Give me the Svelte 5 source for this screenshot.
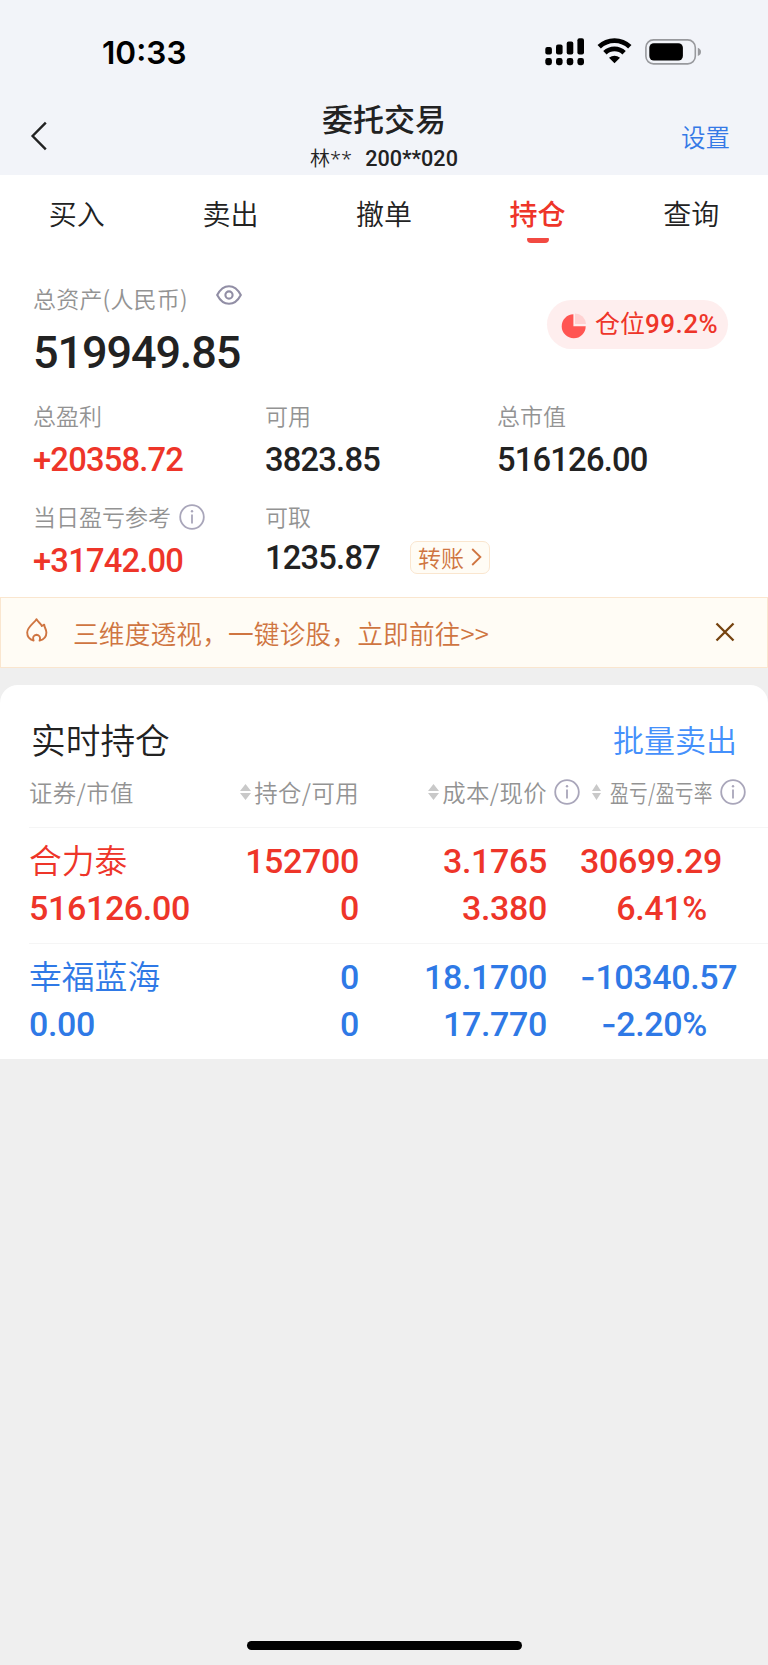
<script>
  let activeTab = $state('持仓');
  let showAmounts = $state(true);
  let showBanner = $state(true);

  const tabs = ['买入', '卖出', '撤单', '持仓', '查询'];

  const columns = [
    { label: '证券/市值', sortable: false, info: false },
    { label: '持仓/可用', sortable: true, info: false },
    { label: '成本/现价', sortable: true, info: true },
    { label: '盈亏/盈亏率', sortable: true, info: true, narrow: true }
  ];

  const holdings = [
    {
      name: '合力泰',
      value: '516126.00',
      amount: '152700',
      available: '0',
      cost: '3.1765',
      price: '3.380',
      profit: '30699.29',
      rate: '6.41%',
      trend: 'up'
    },
    {
      name: '幸福蓝海',
      value: '0.00',
      amount: '0',
      available: '0',
      cost: '18.1700',
      price: '17.770',
      profit: '-10340.57',
      rate: '-2.20%',
      trend: 'down'
    }
  ];

  // Hide amounts when the eye is toggled off
  function mask(text) {
    return showAmounts ? text : '****';
  }
</script>

{#snippet infoIcon()}
  <svg class="info-icon" width="26" height="26" viewBox="0 0 26 26" fill="none">
    <circle cx="13" cy="13" r="11.8" stroke="#a9a6ba" stroke-width="1.8" />
    <path d="M13 10.6V19.4" stroke="#a9a6ba" stroke-width="1.8" />
    <circle cx="13" cy="7.2" r="1.2" fill="#a9a6ba" />
  </svg>
{/snippet}

{#snippet signed(text)}
  {#if text.startsWith('-')}<span class="sign">-</span>{text.slice(1)}{:else}{text}{/if}
{/snippet}

<div class="screen">
  <div class="status-bar">
    <span class="time">10:33</span>
    <div class="status-icons">
      <svg width="40" height="28" viewBox="0 0 40 28">
        <rect x="0.3" y="9" width="6.6" height="7.5" rx="2" />
        <rect x="11" y="6.5" width="6.6" height="10" rx="2" />
        <rect x="21.7" y="3.5" width="6.6" height="13" rx="2" />
        <rect x="32.4" y="0.3" width="6.6" height="16.2" rx="2" />
        <rect x="0.3" y="20" width="6.6" height="7.2" rx="2.4" />
        <rect x="11" y="20" width="6.6" height="7.2" rx="2.4" />
        <rect x="21.7" y="20" width="6.6" height="7.2" rx="2.4" />
        <rect x="32.4" y="20" width="6.6" height="7.2" rx="2.4" />
      </svg>
      <svg class="wifi" width="35" height="26" viewBox="0 0 35 26">
        <path d="M2.2 8.8A22 22 0 0 1 32.8 8.8" fill="none" stroke="#000" stroke-width="4.8" />
        <path d="M7.9 14.7A13.8 13.8 0 0 1 27.1 14.7" fill="none" stroke="#000" stroke-width="4.8" />
        <path d="M12 19.8Q17.5 15.8 23 19.8L17.5 25.3Z" />
      </svg>
      <svg class="battery" width="57" height="26" viewBox="0 0 57 26">
        <rect x="0.9" y="0.9" width="49.4" height="24" rx="7.6" fill="none" stroke="#98999d" stroke-width="1.6" />
        <rect x="4.3" y="4.2" width="33.6" height="17.4" rx="4.6" />
        <path d="M52.8 8.8Q56 10.2 56 12.9Q56 15.6 52.8 17Z" fill="#98999d" />
      </svg>
    </div>
  </div>

  <header class="nav">
    <button class="back" aria-label="返回">
      <svg width="18" height="30" viewBox="0 0 18 30" fill="none">
        <path d="M15.8 1.6L2.6 15L15.8 28.4" stroke="#222" stroke-width="2.4" />
      </svg>
    </button>
    <div class="nav-title">
      <h1>委托交易</h1>
      <div class="account"><span class="owner">林**</span><span class="num">200**020</span></div>
    </div>
    <button class="settings">设置</button>
  </header>

  <nav class="tabs">
    {#each tabs as tab}
      <button class="tab" class:active={tab === activeTab} onclick={() => (activeTab = tab)}>{tab}</button>
    {/each}
  </nav>

  <section class="assets">
    <div class="total">
      <div class="total-main">
        <div class="total-label">
          <span class="label">总资产(人民币)</span>
          <button class="eye" aria-label="显示金额" onclick={() => (showAmounts = !showAmounts)}>
            <svg width="26" height="20" viewBox="0 0 26 20" fill="none" stroke="#918ea5" stroke-width="2.1">
              <path d="M1.2 10Q5.8 1.2 13 1.2T24.8 10Q20.2 18.8 13 18.8T1.2 10Z" />
              <circle cx="13" cy="10" r="3.6" />
            </svg>
          </button>
        </div>
        <div class="total-value num">{mask('519949.85')}</div>
      </div>
      <div class="position">
        <svg width="26" height="26" viewBox="0 0 26 26">
          <path d="M12.4 1.2A12 12 0 1 0 24.7 13.2H12.4Z" fill="#ff5552" />
          <path d="M14 0.6A11 11 0 0 1 25 11H14Z" fill="#ffd2d2" />
        </svg>
        <span>仓位<span class="num">99.2%</span></span>
      </div>
    </div>

    <div class="stats">
      <div class="stat">
        <div class="label">总盈利</div>
        <div class="value num red">{mask('+20358.72')}</div>
      </div>
      <div class="stat">
        <div class="label">可用</div>
        <div class="value num">{mask('3823.85')}</div>
      </div>
      <div class="stat">
        <div class="label">总市值</div>
        <div class="value num">{mask('516126.00')}</div>
      </div>
      <div class="stat">
        <div class="label">当日盈亏参考{@render infoIcon()}</div>
        <div class="value num red">{mask('+31742.00')}</div>
      </div>
      <div class="stat">
        <div class="label">可取</div>
        <div class="value-row">
          <span class="value num">{mask('1235.87')}</span>
          <button class="transfer">
            转账
            <svg width="11" height="18" viewBox="0 0 11 18" fill="none">
              <path d="M1.2 1L9.4 9L1.2 17" stroke="#cf7541" stroke-width="1.8" />
            </svg>
          </button>
        </div>
      </div>
    </div>
  </section>

  {#if showBanner}
    <div class="banner">
      <svg class="flame" width="22" height="24" viewBox="0 0 22 24" fill="none">
        <path
          d="M10.5 1.2C8.2 5.2 1.2 8.6 1.2 14.6C1.2 18.7 3.8 21.6 7.6 22.6C6.4 18.9 7.8 17 10.6 16.7C13.2 17 14.8 18.9 13.6 22.6C17.5 21.6 20.4 18.6 20.4 14.4C20.4 11.4 18.4 9.8 18.2 6.6L15.8 8C14.8 5.4 12 4.3 10.5 1.2Z"
          stroke="#cf7541"
          stroke-width="1.9"
          stroke-linejoin="round"
        />
      </svg>
      <span class="banner-text">三维度透视，一键诊股，立即前往&gt;&gt;</span>
      <button class="close" aria-label="关闭" onclick={() => (showBanner = false)}>
        <svg width="20" height="20" viewBox="0 0 20 20" fill="none">
          <path d="M1.5 1.5L18.5 18.5M18.5 1.5L1.5 18.5" stroke="#75430f" stroke-width="2.3" />
        </svg>
      </button>
    </div>
  {/if}

  <section class="card">
    <div class="card-head">
      <h2>实时持仓</h2>
      <button class="batch">批量卖出</button>
    </div>

    <div class="grid table-head">
      {#each columns as col}
        <div class="th" class:narrow={col.narrow}>
          {#if col.sortable}
            <svg class="sort" width="11" height="16" viewBox="0 0 11 16" preserveAspectRatio="none" fill="#c9c9c9">
              <path d="M5.5 0L11 6.9H0ZM5.5 16L11 9.1H0Z" />
            </svg>
          {/if}
          <span class="th-text"><span>{col.label}</span></span>
          {#if col.info}{@render infoIcon()}{/if}
        </div>
      {/each}
    </div>

    {#each holdings as item}
      <div class="grid holding {item.trend}">
        <div class="name">{item.name}</div>
        <div class="num">{item.amount}</div>
        <div class="num">{item.cost}</div>
        <div class="num profit">{@render signed(item.profit)}</div>
        <div class="num">{item.value}</div>
        <div class="num">{item.available}</div>
        <div class="num">{item.price}</div>
        <div class="num rate">{@render signed(item.rate)}</div>
      </div>
    {/each}
  </section>

  <div class="home-bar"></div>
</div>

<style>
  :global(body) {
    margin: 0;
    background: #efefef;
  }

  .screen {
    display: flex;
    flex-direction: column;
    width: 768px;
    height: 1665px;
    overflow: hidden;
    background: #efefef;
    color: #222;
    font-family: 'Noto Sans CJK SC', sans-serif;
    font-weight: 350;
  }

  .screen > * {
    flex-shrink: 0;
    box-sizing: border-box;
  }

  button {
    margin: 0;
    padding: 0;
    border: none;
    background: none;
    color: inherit;
    font: inherit;
    cursor: pointer;
  }

  svg {
    display: block;
    flex-shrink: 0;
  }

  h1,
  h2 {
    margin: 0;
  }

  .num {
    font-family: Roboto, sans-serif;
    font-weight: 500;
  }

  .sign {
    font-family: Inter, sans-serif;
    line-height: 1;
  }

  .red {
    color: #ee3529;
  }

  /* Status bar and navigation */
  .status-bar {
    display: flex;
    justify-content: space-between;
    height: 100px;
    padding: 38px 66px 0 102px;
    background: #f2f4f9;
    color: #000;
  }

  .time {
    height: 28px;
    line-height: 29px;
    font-family: Inter, sans-serif;
    font-size: 31.6px;
    font-weight: 600;
  }

  .status-icons {
    display: flex;
    align-items: flex-start;
  }

  .wifi {
    margin: 0 13px 0 12px;
  }

  .battery {
    margin-top: 1px;
  }

  .nav {
    display: grid;
    grid-template-columns: 150px 1fr 150px;
    height: 75px;
    background: #f2f4f9;
  }

  .back {
    padding: 21px 0 0 30px;
    justify-self: start;
    align-self: start;
  }

  .nav-title {
    text-align: center;
  }

  h1 {
    height: 38px;
    line-height: 35px;
    font-size: 31px;
    font-weight: 500;
  }

  .account {
    display: flex;
    justify-content: center;
    gap: 13px;
    line-height: 41px;
    font-size: 20px;
  }

  .owner {
    font-family: 'Noto Sans', 'Noto Sans CJK SC', sans-serif;
  }

  .account .num {
    font-size: 21.6px;
  }

  .settings {
    height: 70px;
    padding-right: 38px;
    justify-self: end;
    line-height: 73px;
    font-size: 24.5px;
    color: #3579e6;
  }

  .tabs {
    display: grid;
    grid-template-columns: repeat(5, 1fr);
    height: 85px;
    background: #fff;
  }

  .tab {
    display: flex;
    flex-direction: column;
    align-items: center;
    height: 76px;
    line-height: 77px;
    font-size: 28px;
  }

  .tab.active {
    font-weight: 500;
    color: #ee3529;
  }

  .tab.active::after {
    content: '';
    width: 22px;
    height: 5.5px;
    margin-top: -14.5px;
    border-radius: 1px 1px 4px 4px;
    background: #f24a42;
  }

  /* Asset summary */
  .assets {
    height: 337px;
    padding: 24px 0 0 33px;
    background: #fff;
  }

  .label {
    display: flex;
    align-items: center;
    gap: 8px;
    font-size: 23px;
    line-height: 28px;
    color: #939393;
  }

  .label .info-icon {
    margin: 2px 0 0;
  }

  .total {
    display: flex;
    justify-content: space-between;
    height: 117px;
    padding-right: 40px;
  }

  .total-label {
    display: flex;
    gap: 28px;
    height: 28px;
  }

  .total-label .label {
    letter-spacing: 0.2px;
  }

  .eye {
    height: 22px;
  }

  .total-value {
    margin-top: 15px;
    line-height: 52px;
    font-size: 45px;
    letter-spacing: -1.1px;
  }

  .position {
    display: flex;
    box-sizing: border-box;
    gap: 8px;
    width: 181px;
    height: 49px;
    margin-top: 16px;
    padding: 0 10px 0 14px;
    border-radius: 25px;
    background: #feeeee;
    color: #ee3529;
    line-height: 44px;
    font-size: 25px;
    font-weight: 400;
    white-space: nowrap;
  }

  .position svg {
    margin-top: 13px;
  }

  .position .num {
    font-size: 26px;
    letter-spacing: 0.5px;
  }

  .stats {
    display: grid;
    grid-template-columns: repeat(3, 232px);
    grid-auto-rows: 101px;
  }

  .value {
    margin-top: 9px;
    line-height: 44px;
    font-size: 32.7px;
    letter-spacing: -0.8px;
  }

  .value-row {
    display: flex;
    align-items: center;
    margin-top: 6px;
  }

  .value-row .value {
    width: 145px;
    margin: 0;
  }

  .transfer {
    display: flex;
    align-items: center;
    gap: 7px;
    box-sizing: border-box;
    width: 80px;
    height: 33px;
    margin-bottom: 2px;
    padding-left: 7px;
    border: 1px solid #fae6cf;
    border-radius: 7px;
    background: #fffcf5;
    color: #cf7541;
    font-size: 23px;
    line-height: 30px;
    white-space: nowrap;
  }

  /* Notice */
  .banner {
    display: flex;
    align-items: center;
    height: 71px;
    padding: 0 32px 0 25px;
    border: 1px solid #fae6cf;
    background: #fffcf5;
    color: #cf7541;
  }

  .flame {
    margin-top: -5px;
  }

  .close {
    margin-top: -1px;
  }

  .banner-text {
    flex: 1;
    padding-left: 25px;
    font-size: 25.7px;
    line-height: 66px;
    letter-spacing: 0.15px;
  }

  /* Holdings */
  .card {
    height: 374px;
    margin-top: 17px;
    border-radius: 18px 18px 0 0;
    background: #fff;
  }

  .card-head {
    display: flex;
    justify-content: space-between;
    height: 83px;
    padding: 0 31px 0 31px;
    line-height: 108px;
  }

  h2 {
    font-size: 34.7px;
    font-weight: 350;
  }

  .batch {
    line-height: 108px;
    font-size: 31px;
    color: #4590fb;
  }

  .grid {
    display: grid;
    grid-template-columns: 180px 150px 188px 222px;
    margin-left: 29px;
  }

  .table-head {
    height: 59px;
    line-height: 46px;
    font-size: 23.4px;
    letter-spacing: 0.4px;
    color: #939393;
  }

  .th {
    display: flex;
    height: 48px;
    align-items: center;
    justify-content: flex-end;
    gap: 3px;
    white-space: nowrap;
  }

  .th:first-child {
    justify-content: flex-start;
  }

  .th:nth-child(3) {
    margin-right: -33px;
  }

  .th .info-icon {
    margin-left: 4px;
  }

  .narrow {
    padding-right: 23px;
  }

  .narrow .sort {
    width: 9px;
    margin-right: 6px;
  }

  .narrow .th-text {
    width: 103px;
  }

  .narrow .th-text span {
    display: inline-block;
    transform: scaleX(0.8);
    transform-origin: left;
  }

  .holding {
    box-sizing: border-box;
    height: 116px;
    padding-top: 10px;
    grid-auto-rows: 47px;
    border-top: 1px solid #f5f5f5;
    line-height: 46px;
    font-size: 34px;
    text-align: right;
  }

  .holding > :nth-child(4n + 1) {
    text-align: left;
  }

  .holding .num {
    letter-spacing: -0.35px;
  }

  .holding .name {
    font-size: 32.8px;
    line-height: 42px;
  }

  .holding .profit {
    padding-left: 33px;
    text-align: left;
  }

  .rate {
    width: 160px;
  }

  .up {
    color: #ee3529;
  }

  .down {
    color: #2f79e6;
  }

  .home-bar {
    width: 275px;
    height: 9px;
    margin: auto auto 15px;
    border-radius: 5px;
    background: #000;
  }
</style>
